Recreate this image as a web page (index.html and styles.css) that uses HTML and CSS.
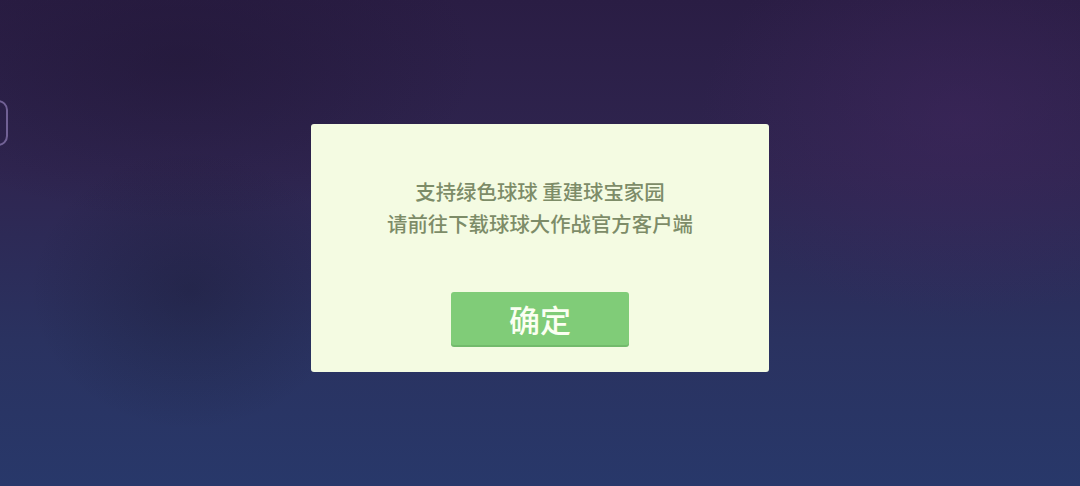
FILE: index.html
```html
<!DOCTYPE html>
<html>
<head>
    <title>球球大作战</title>
    <link rel="stylesheet" href="styles.css">
</head>
<body>
    <div class="side-tab"></div>
    <div class="dialog">
        <div class="message">
            <p>支持绿色球球 重建球宝家园</p>
            <p>请前往下载球球大作战官方客户端</p>
        </div>
        <button class="ok-btn">确定</button>
    </div>
</body>
</html>
```

FILE: styles.css
```css
html, body {
    height: 100%;
}
body {
    margin: 0;
    height: 486px;
    box-sizing: border-box;
    padding-top: 10px;
    display: flex;
    justify-content: center;
    align-items: center;
    overflow: hidden;
    font-family: "Noto Sans CJK SC", "Noto Sans", sans-serif;
    background:
        radial-gradient(ellipse 160px 140px at 190px 290px, rgba(20, 20, 40, 0.3), rgba(20, 20, 40, 0)),
        radial-gradient(ellipse 260px 200px at 960px 120px, rgba(70, 40, 100, 0.4), rgba(70, 40, 100, 0)),
        radial-gradient(ellipse 300px 160px at 180px 60px, rgba(30, 20, 50, 0.45), rgba(30, 20, 50, 0)),
        linear-gradient(to bottom, #2a1d44 0%, #2f2550 35%, #2a3260 70%, #28386a 100%);
}
.side-tab {
    position: absolute;
    left: -14px;
    top: 100px;
    width: 18px;
    height: 42px;
    border: 2px solid rgba(160, 140, 200, 0.6);
    border-radius: 10px;
}
.dialog {
    width: 458px;
    height: 248px;
    box-sizing: border-box;
    background-color: #f4fbe2;
    border-radius: 3px;
    display: flex;
    flex-direction: column;
    align-items: center;
    padding-top: 51px;
}
.message {
    text-align: center;
    color: #7d8c68;
    font-size: 20.4px;
    font-weight: 500;
    line-height: 32px;
}
.message p {
    margin: 0;
}
.ok-btn {
    margin-top: 53px;
    width: 178px;
    height: 53px;
    background-color: #80cc78;
    color: #fbfff2;
    border: none;
    border-radius: 3px;
    box-shadow: 0 2px 0 #72ba6b;
    font-family: "Noto Sans CJK SC", "Noto Sans", sans-serif;
    font-size: 31px;
    font-weight: 500;
    padding: 0;
    cursor: pointer;
}
```
